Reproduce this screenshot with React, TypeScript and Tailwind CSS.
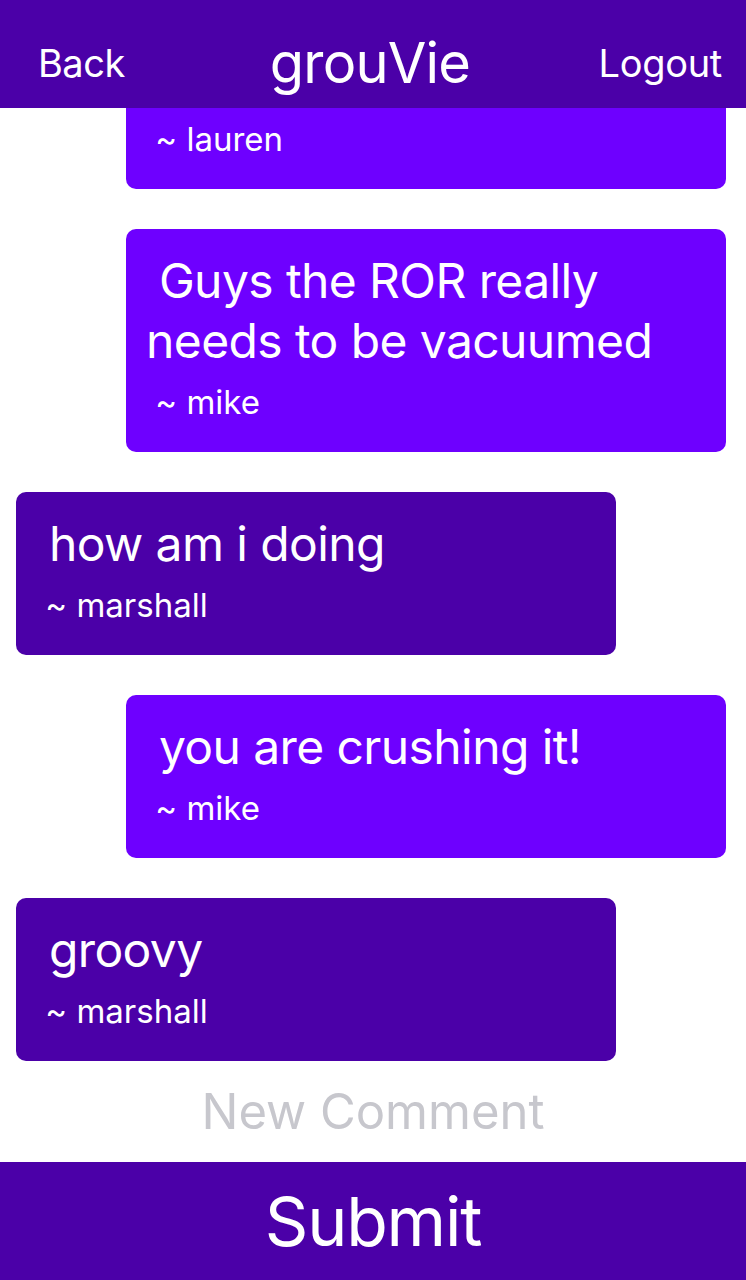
import React from 'react';

type Comment = {
  id: number;
  text: string;
  author: string;
  mine: boolean;
};

const comments: Comment[] = [
  { id: 1, text: 'dinner at 7 tonight?', author: 'lauren', mine: true },
  { id: 2, text: 'Guys the ROR really needs to be vacuumed', author: 'mike', mine: true },
  { id: 3, text: 'how am i doing', author: 'marshall', mine: false },
  { id: 4, text: 'you are crushing it!', author: 'mike', mine: true },
  { id: 5, text: 'groovy', author: 'marshall', mine: false },
];

const Bubble: React.FC<{ comment: Comment }> = ({ comment }) => (
  <div
    className={`shrink-0 w-[600px] rounded-[10px] px-5 pt-[22px] pb-[30px] text-white ${
      comment.mine ? 'self-end mr-5 bg-[#6e00ff]' : 'self-start ml-4 bg-[#4b00a8]'
    }`}
  >
    <p className="text-[48px] leading-[60px] tracking-[-0.6px]">{'\u00a0' + comment.text}</p>
    <p className="mt-[11px] text-[33px] leading-[40px]">{'\u00a0~ ' + comment.author}</p>
  </div>
);

export default function App() {
  return (
    <div className="flex h-[1280px] w-[746px] flex-col overflow-hidden bg-white font-['Inter',sans-serif]">
      <div className="relative z-10 grid h-[108px] shrink-0 grid-cols-[1fr_auto_1fr] items-center bg-[#4b00a8] pl-[38px] pr-6 pt-[18px] text-white">
        <span className="justify-self-start text-[38px] tracking-[-0.5px]">Back</span>
        <span className="mr-5 text-[56px] tracking-[-0.8px]">grouVie</span>
        <span className="justify-self-end text-[38px] tracking-[-0.3px]">Logout</span>
      </div>

      <div className="flex min-h-0 flex-1 flex-col justify-end gap-10 overflow-hidden">
        {comments.map((c) => (
          <Bubble key={c.id} comment={c} />
        ))}
      </div>

      <div className="flex h-[101px] shrink-0 items-center justify-center">
        <input
          placeholder="New Comment"
          className="w-full bg-transparent text-center text-[49px] text-black outline-none placeholder:text-[#c7c7cd]"
        />
      </div>

      <button className="flex h-[118px] shrink-0 items-center justify-center bg-[#4b00a8] text-[68px] tracking-[-1.2px] text-white">
        Submit
      </button>
    </div>
  );
}
